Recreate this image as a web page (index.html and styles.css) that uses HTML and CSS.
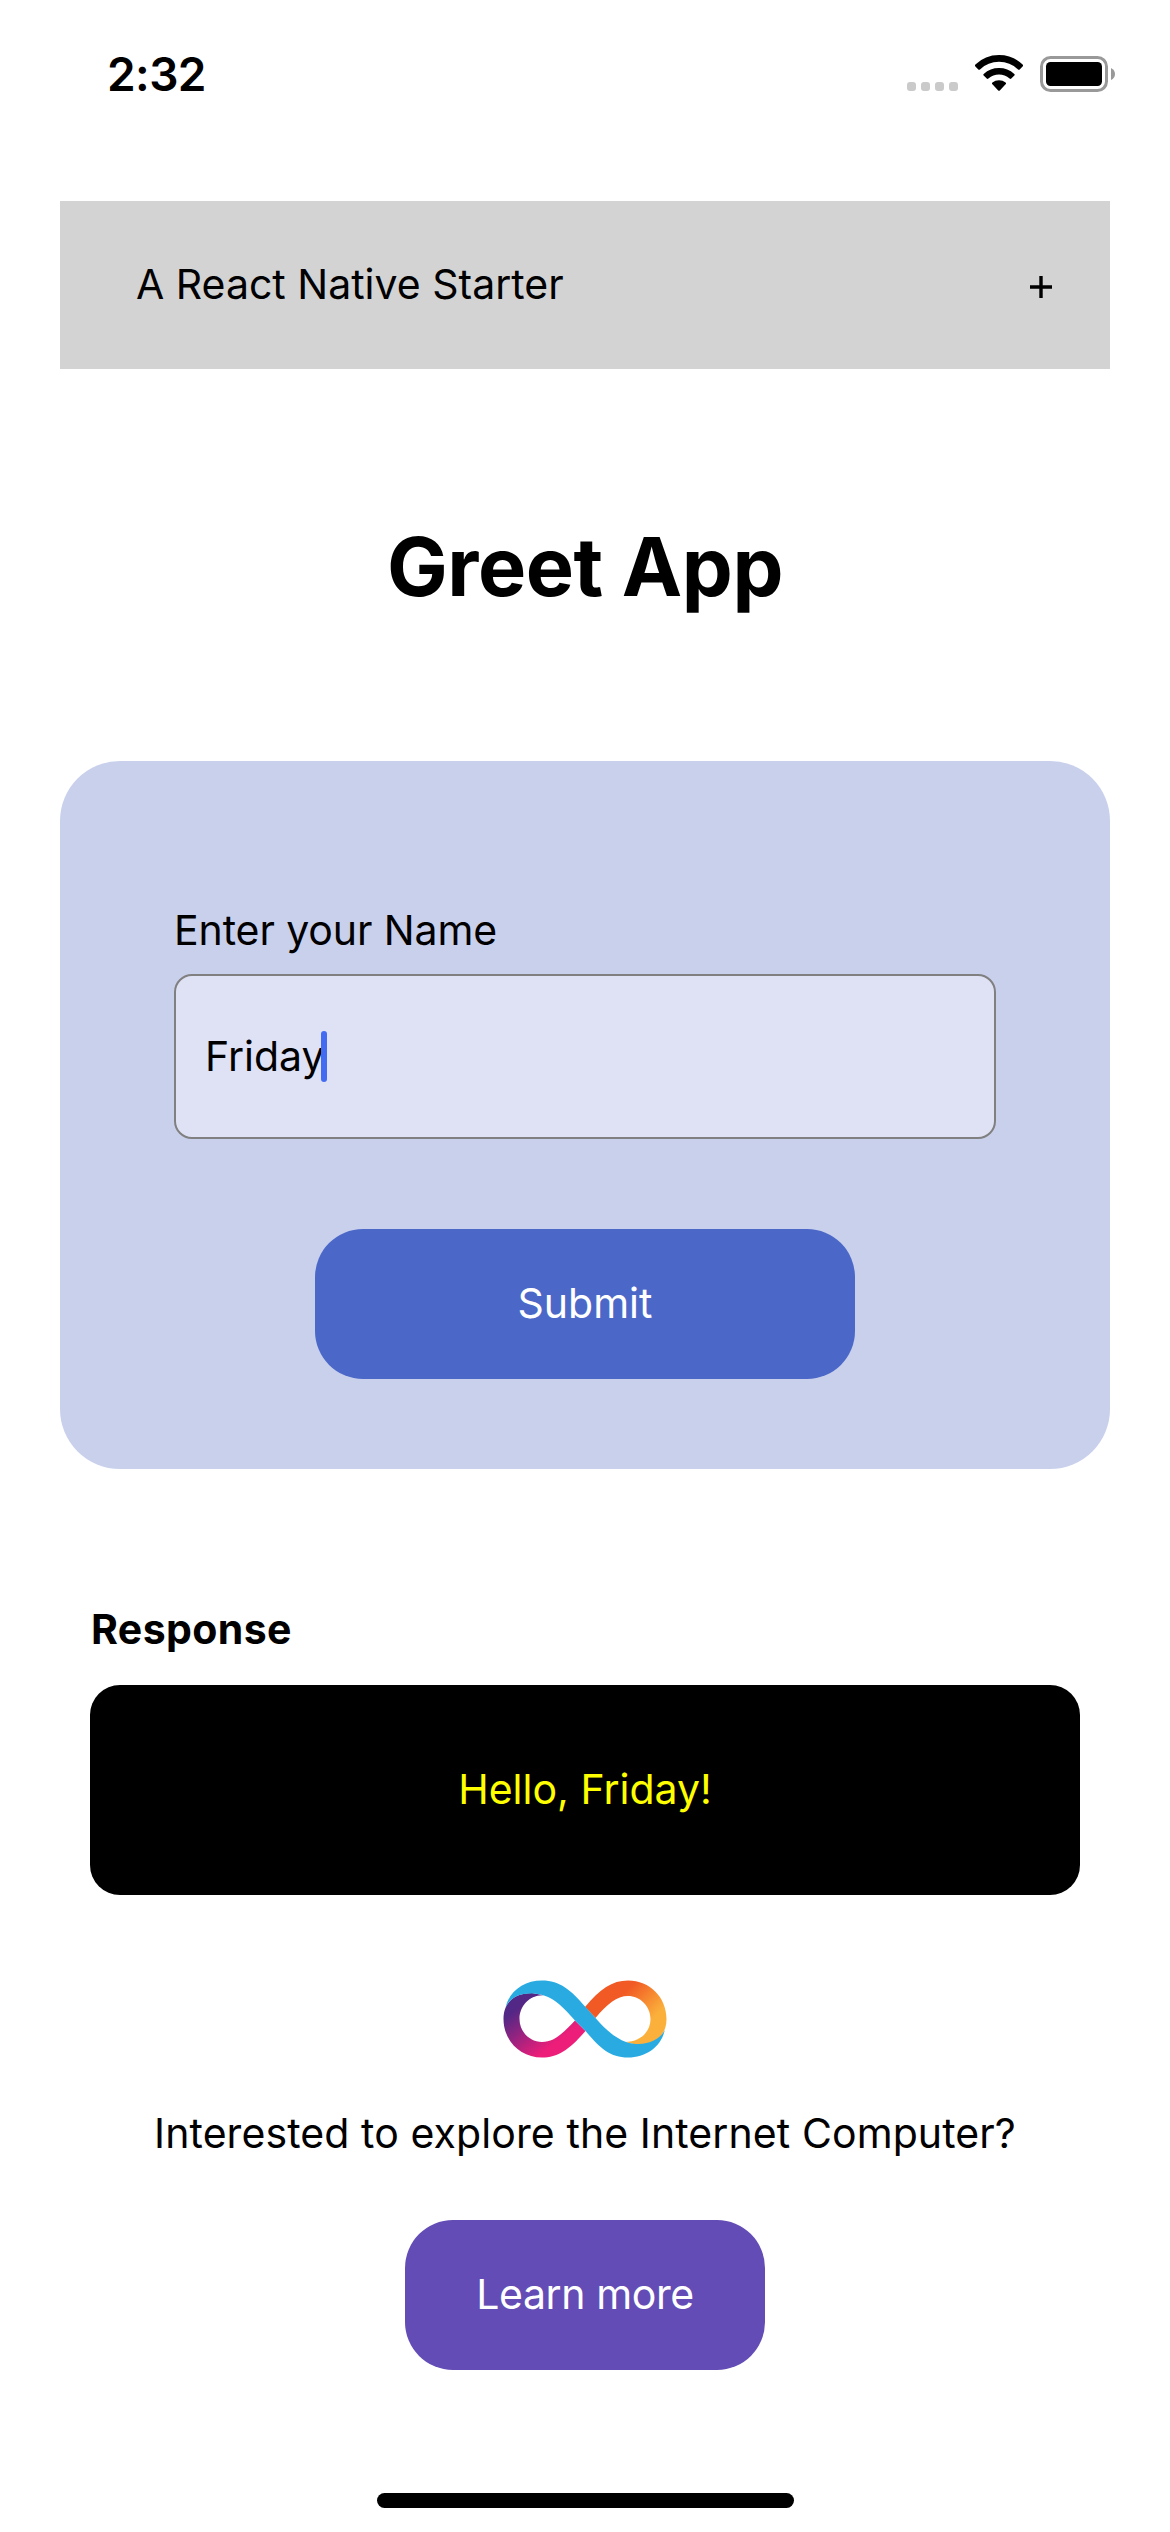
FILE: index.html
```html
<!DOCTYPE html>
<html lang="en">
<head>
<meta charset="utf-8">
<title>Greet App</title>
<link rel="stylesheet" href="styles.css">
</head>
<body>
<div class="screen">
  <div class="status">
    <span class="time">2:32</span>
    <svg class="status-icons" width="216" height="50" viewBox="900 48 216 50">
      <g fill="#cacaca"><rect x="907" y="82" width="9" height="9" rx="3"/><rect x="921" y="82" width="9" height="9" rx="3"/><rect x="935" y="82" width="9" height="9" rx="3"/><rect x="949" y="82" width="9" height="9" rx="3"/></g>
      <path d="M999 55q-14 0-23.600 9.600q-.9 1 0 1.800l2.900 3q.8.800 1.700 0q8-7.600 19-7.600t19 7.600q.9.800 1.700 0l2.900-3q.9-.8 0-1.800q-9.600-9.600-23.600-9.600zM999 68q-8.800 0-15.300 5.900q-.9.900 0 1.700l3 3q.8.700 1.700 0q4.700-4 10.600-4t10.600 4q.9.700 1.700 0l3-3q.9-.8 0-1.700q-6.500-5.900-15.300-5.900zM999 80.300q-3.800 0-6.600 2.300q-.9.800 0 1.600l5.800 6.200q.8.700 1.600 0l5.800-6.200q.9-.8 0-1.600q-2.800-2.300-6.600-2.300z"/>
      <rect x="1041.500" y="57.500" width="65" height="33" rx="9" fill="none" stroke="#999" stroke-width="3"/>
      <rect x="1046" y="62" width="56" height="24" rx="4.500"/>
      <path d="M1111 68q4 2 4 6t-4 6z" fill="#999"/>
    </svg>
  </div>
  <header class="banner"><span class="banner-text">A React Native Starter</span><svg class="plus" width="22" height="22" viewBox="0 0 22 22"><path d="M11 0v22M0 11h22" stroke="#000" stroke-width="3.400"/></svg></header>
  <h1 class="title"><span>Greet App</span></h1>
  <main class="card">
    <label class="label">Enter your Name</label>
    <div class="field"><span class="value">Friday</span><i class="caret"></i></div>
    <button class="submit">Submit</button>
  </main>
  <section class="response">
    <h2 class="heading">Response</h2>
    <div class="output"><span>Hello, Friday!</span></div>
  </section>
  <svg class="logo" width="164" height="78" viewBox="503 1980 164 78">
    <defs>
      <linearGradient id="warm" gradientUnits="userSpaceOnUse" x1="618" y1="1984" x2="657" y2="2022"><stop offset=".2" stop-color="#f15a24"/><stop offset=".9" stop-color="#fbb03b"/></linearGradient>
      <linearGradient id="cool" gradientUnits="userSpaceOnUse" x1="552" y1="2054" x2="513" y2="2003"><stop offset=".1" stop-color="#ed1e79"/><stop offset=".9" stop-color="#522785"/></linearGradient>
    </defs>
    <path d="M575 2020.500L585.500 2031C569 2050 558 2057.500 542 2057.500C520 2057.500 503.500 2040.500 503.500 2019C503.500 2002 515 1993 532 1993L545 1995.500C530 1994 519.500 2006 519.500 2019C519.500 2032 530 2042 542 2042C554 2042 562 2034 575 2020.500Z" fill="url(#cool)"/>
    <path d="M595.500 2018L585 2007C600 1989 612 1980.500 628 1980.500C650 1980.500 666.500 1997.500 666.500 2019C666.500 2036 655 2045 638 2045L625 2042C640 2042 650.500 2032 650.500 2019C650.500 2006 640 1996 628 1996C617 1996 607 2004 595.500 2018Z" fill="url(#warm)"/>
    <path d="M505.500 2008C509 1991 524 1980.500 542 1980.500C560 1980.500 571 1990 585.500 2007L595.500 2018C605 2029 615 2038 626 2042C644 2048 660 2040 664.800 2030C661 2047 646 2057.500 628 2057.500C610 2057.500 600 2048 585.500 2031L575 2020.500C564 2008 555 1998.500 544 1995.500C528 1991 511 1994 505.500 2008Z" fill="#29abe2"/>
  </svg>
  <p class="question">Interested to explore the Internet Computer?</p>
  <button class="learn">Learn more</button>
  <div class="home"></div>
</div>
</body>
</html>
```
FILE: styles.css
```css
* { box-sizing: border-box; }
body { margin: 0; background: #fff; }
.screen {
  width: 1170px; height: 2532px; overflow: hidden;
  display: flex; flex-direction: column; align-items: center;
  font: 41px/50px Inter, sans-serif; color: #000; white-space: nowrap;
}
.status {
  width: 100%; height: 201px; padding: 47px 54px 0 107px;
  display: flex; justify-content: space-between; align-items: flex-start;
}
.time { font-size: 46px; line-height: 55px; font-weight: 600; letter-spacing: -.6px; }
.status-icons { margin-top: 1px; }
.banner {
  width: 1050px; height: 168px; padding: 0 58px 0 76px; background: #d3d3d3;
  display: flex; align-items: center; justify-content: space-between;
}
.banner-text, .value, .output span { padding-bottom: 2px; }
.plus { margin-top: 4px; }
.title { margin: 148px 0 0; height: 100px; font-size: 81px; line-height: 100px; font-weight: 700; letter-spacing: -.4px; }
.card {
  width: 1050px; height: 708px; margin-top: 144px; padding: 144px 114px 90px;
  background: #c9d0ec; border-radius: 60px;
  display: flex; flex-direction: column;
}
.label { height: 50px; margin-bottom: 19px; letter-spacing: -.1px; }
.field {
  width: 822px; height: 165px; border: 2px solid #808080; border-radius: 18px;
  background: #dfe2f5; padding-left: 29px; display: flex; align-items: center;
}
.caret { width: 6px; height: 51px; margin-left: -4px; border-radius: 3px; background: #426bf2; }
button { border: 0; padding: 0 0 2px; height: 150px; border-radius: 48px; color: #fff; font: inherit; flex: none; }
.submit { width: 540px; margin: 90px auto 0; background: #4b68c8; }
.response { width: 990px; margin-top: 135px; }
.heading { margin: 0 0 31px; padding-left: 1px; font-size: 41px; line-height: 50px; font-weight: 700; letter-spacing: .4px; }
.output {
  height: 210px; border-radius: 30px; background: #000; color: #ff0;
  display: flex; align-items: center; justify-content: center;
}
.logo { margin-top: 85px; flex: none; }
.question { margin: 50px 0 62px; letter-spacing: .09px; }
.learn { width: 360px; background: #634cb5; letter-spacing: -.4px; }
.home { width: 417px; height: 15px; margin-top: 123px; border-radius: 8px; background: #000; }
```
